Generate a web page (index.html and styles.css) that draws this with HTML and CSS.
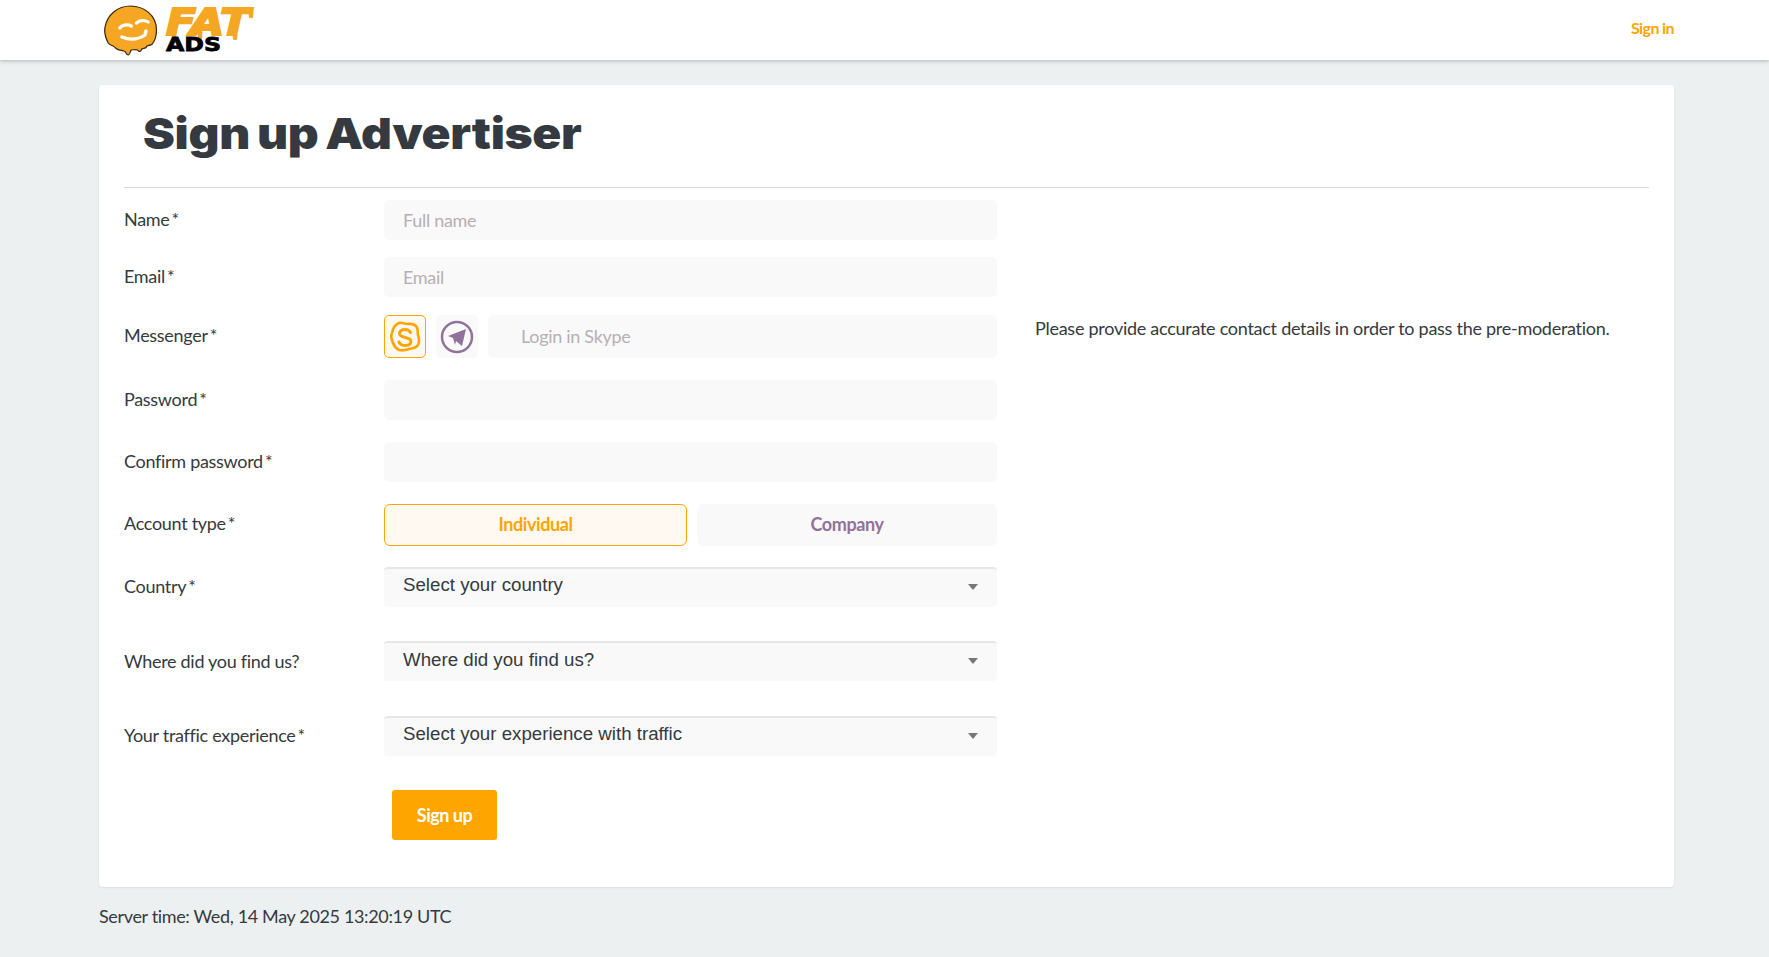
FILE: index.html
```html
<!DOCTYPE html>
<html lang="en">
<head>
    <meta charset="UTF-8">
    <meta name="viewport" content="width=device-width, initial-scale=1.0">
    <title>Sign up Advertiser</title>
    <link rel="stylesheet" href="styles.css">
</head>
<body>

    <header class="topbar">
        <div class="topbar-inner">
            <svg class="logo" width="152" height="56" viewBox="0 0 152 56" aria-label="Fat Ads">
                <g transform="translate(1 2) scale(1.05 1)">
                    <path d="M25 2c13 0 25 9 25 24 0 6-1 10-4 14-2 2-3 1-5 2-1 3-3 2-5 3-1 3-3 3-4 1-2-1-4 0-6 0-1 1-1 4-3 5-2 0-2-4-4-4-3-1-5 0-8-3-2-3-5-2-7-5C1 33 0 28 1 23 3 11 13 2 25 2z" fill="#f5a623" stroke="#3a2a10" stroke-width="1.2"/>
                    <path d="M15 24c2-3 7-4 11-2M31 19c3-3 8-3 11-1M17 33c7 3 15 3 22-2l1-4" fill="none" stroke="#fff" stroke-width="3.200" stroke-linecap="round"/>
                </g>
                <text class="logo-fat" x="63" y="33" textLength="84" lengthAdjust="spacingAndGlyphs">FAT</text>
                <path d="M71 30v7M97 28v8M132 14v22M148 9v5" stroke="#f5a623" stroke-width="4.500" stroke-linecap="round"/>
                <text class="logo-ads" x="63" y="49" textLength="55" lengthAdjust="spacingAndGlyphs">ADS</text>
            </svg>
            <a class="signin" href="#">Sign in</a>
        </div>
    </header>

    <main class="card">
        <div class="card-head">
            <h1>Sign up Advertiser</h1>
        </div>
        <form class="signup-form">
            <div class="row row-name">
                <label>Name<span class="req">*</span></label>
                <input class="field" type="text" placeholder="Full name">
            </div>
            <div class="row row-email">
                <label>Email<span class="req">*</span></label>
                <input class="field" type="text" placeholder="Email">
            </div>
            <div class="row row-messenger">
                <label>Messenger<span class="req">*</span></label>
                <div class="messenger">
                    <button class="msg-btn active" type="button" aria-label="Skype">
                        <svg width="34" height="34" viewBox="0 0 34 34">
                            <path d="M11 3c3-1 5 1 8 1 3 0 6-1 9 2 3 3 1 6 2 9 1 3 2 6 0 10-3 4-6 3-9 4-3 1-6 2-10 1-4-2-5-4-6-7-1-3-3-6-1-10 1-5 4-9 7-10z" fill="none" stroke="#ffa500" stroke-width="2.600"/>
                            <path d="M22.500 12.500c-1-2-3-3-5.500-3-3 0-5.500 1.500-5.500 4 0 5.500 11.500 2.500 11.500 8 0 2.500-2.500 4-5.800 4-3 0-5.200-1.200-6.200-3.500" fill="none" stroke="#ffa500" stroke-width="3" stroke-linecap="round"/>
                        </svg>
                    </button>
                    <button class="msg-btn" type="button" aria-label="Telegram">
                        <svg width="34" height="34" viewBox="0 0 34 34">
                            <circle cx="17" cy="17" r="15" fill="none" stroke="#92729a" stroke-width="2.500"/>
                            <path d="M8 16l18-7-4 17-6-5-1 4-2-7z" fill="#92729a"/>
                        </svg>
                    </button>
                    <input class="field field-login" type="text" placeholder="Login in Skype">
                </div>
                <p class="note">Please provide accurate contact details in order to pass the pre-moderation.</p>
            </div>
            <div class="row row-password">
                <label>Password<span class="req">*</span></label>
                <input class="field" type="password">
            </div>
            <div class="row row-confirm">
                <label>Confirm password<span class="req">*</span></label>
                <input class="field" type="password">
            </div>
            <div class="row row-account">
                <label>Account type<span class="req">*</span></label>
                <div class="account-type">
                    <button class="type-btn active" type="button">Individual</button>
                    <button class="type-btn" type="button">Company</button>
                </div>
            </div>
            <div class="row row-country">
                <label>Country<span class="req">*</span></label>
                <div class="select">Select your country</div>
            </div>
            <div class="row row-find">
                <label>Where did you find us?</label>
                <div class="select">Where did you find us?</div>
            </div>
            <div class="row row-traffic">
                <label>Your traffic experience<span class="req">*</span></label>
                <div class="select">Select your experience with traffic</div>
            </div>
            <button class="submit" type="button">Sign up</button>
        </form>
    </main>

    <footer class="server-time">Server time: Wed, 14 May 2025 13:20:19 UTC</footer>

</body>
</html>
```
FILE: styles.css
```css
* {
    box-sizing: border-box;
}

body {
    margin: 0;
    height: 957px;
    overflow: hidden;
    font-family: Lato, sans-serif;
    font-size: 18px;
    color: #343a40;
    background-color: #edf0f1;
    font-variant-ligatures: common-ligatures;
}

.topbar {
    height: 60px;
    background-color: #fff;
    box-shadow: 0 1px 4px rgba(0,0,0,0.25);
}

.topbar-inner {
    width: 1575px;
    margin-left: 99px;
    display: flex;
    align-items: center;
    justify-content: space-between;
    height: 100%;
    padding-left: 4px;
}

.logo {
    display: block;
    margin-top: -1px;
}

.logo-fat {
    font-family: "DejaVu Sans", sans-serif;
    font-weight: 700;
    font-style: italic;
    font-size: 37px;
    fill: #f5a623;
    stroke: #f5a623;
    stroke-width: 2px;
}

.logo-ads {
    font-family: "DejaVu Sans", sans-serif;
    font-weight: 700;
    font-size: 20px;
    fill: #000;
    stroke: #000;
    stroke-width: 0.8px;
}

.signin {
    margin-top: -6px;
    color: #ffa500;
    font-size: 16px;
    font-weight: 700;
    letter-spacing: -0.6px;
    text-decoration: none;
}

.card {
    width: 1575px;
    height: 802px;
    margin: 25px 0 0 99px;
    padding: 0 25px;
    background-color: #fff;
    border-radius: 4px;
    box-shadow: 0 1px 2px rgba(0,0,0,0.08);
}

.card-head {
    height: 103px;
    padding: 23px 0 0 19px;
    border-bottom: 1px solid #d5dadd;
}

h1 {
    display: inline-block;
    margin: 0;
    font-family: Inter, sans-serif;
    font-size: 43px;
    line-height: 50px;
    font-weight: 900;
    letter-spacing: -0.3px;
    word-spacing: -2px;
    color: #343a40;
    transform: scaleX(1.115);
    transform-origin: left center;
}

.row {
    display: grid;
    grid-template-columns: 260px 613px auto;
    align-items: center;
}

.row label {
    padding-bottom: 2px;
    letter-spacing: -0.3px;
}

.req {
    margin-left: 2px;
}

.row-name { margin-top: 12px; }
.row-email { margin-top: 17px; }
.row-messenger { margin-top: 18px; }
.row-password { margin-top: 22px; }
.row-confirm { margin-top: 22px; }
.row-account { margin-top: 22px; }
.row-country { margin-top: 21px; }
.row-find { margin-top: 34px; }
.row-traffic { margin-top: 35px; }

.row-messenger label,
.row-account label {
    padding-bottom: 4px;
}

.row-find label {
    padding-bottom: 0;
}

.field {
    width: 100%;
    height: 40px;
    padding: 0 19px;
    border: none;
    border-radius: 5px;
    background-color: #f9f9f9;
    font-family: Lato, sans-serif;
    font-size: 18px;
    letter-spacing: -0.3px;
    outline: none;
}

.field::placeholder {
    color: #b5afb5;
}

.messenger {
    display: flex;
    gap: 10px;
}

.msg-btn {
    flex: none;
    width: 42px;
    height: 43px;
    padding: 0;
    display: flex;
    align-items: center;
    justify-content: center;
    border: 1px solid #f9f9f9;
    border-radius: 5px;
    background-color: #f9f9f9;
}

.msg-btn.active {
    border-color: #ffa500;
    background-color: #fff9f2;
}

.field-login {
    height: 43px;
    padding: 0 19px 2px 33px;
    flex: 1;
    min-width: 0;
}

.note {
    margin: -17px 0 0 38px;
    letter-spacing: -0.27px;
    white-space: nowrap;
}

.account-type {
    display: grid;
    grid-template-columns: 303px 300px;
    gap: 10px;
}

.type-btn {
    height: 42px;
    padding-bottom: 3px;
    border: 1px solid #f9f9f9;
    border-radius: 6px;
    background-color: #f9f9f9;
    font-family: Lato, sans-serif;
    font-size: 18px;
    font-weight: 700;
    letter-spacing: -0.4px;
    color: #92729a;
}

.type-btn.active {
    border-color: #ffa500;
    background-color: #fff9f2;
    color: #ffa500;
}

.select {
    position: relative;
    height: 40px;
    padding: 4px 19px 0;
    border-top: 2px solid #e6e6e6;
    border-radius: 4px;
    background-color: #f9f9f9;
    font-family: "Liberation Sans", sans-serif;
    font-size: 18.7px;
    line-height: 23px;
}

.row-find .select {
    padding-top: 5px;
}

.select::after {
    content: "";
    position: absolute;
    right: 19px;
    top: 15px;
    border-left: 5px solid transparent;
    border-right: 5px solid transparent;
    border-top: 6px solid #777;
}

.submit {
    display: block;
    width: 105px;
    height: 50px;
    margin: 34px 0 0 268px;
    border: none;
    border-radius: 3px;
    background-color: #ffa500;
    color: #fff;
    font-family: Lato, sans-serif;
    font-size: 18px;
    font-weight: 700;
    letter-spacing: -0.5px;
}

.server-time {
    width: 1575px;
    margin: 18px 0 0 99px;
    letter-spacing: -0.35px;
}
```
